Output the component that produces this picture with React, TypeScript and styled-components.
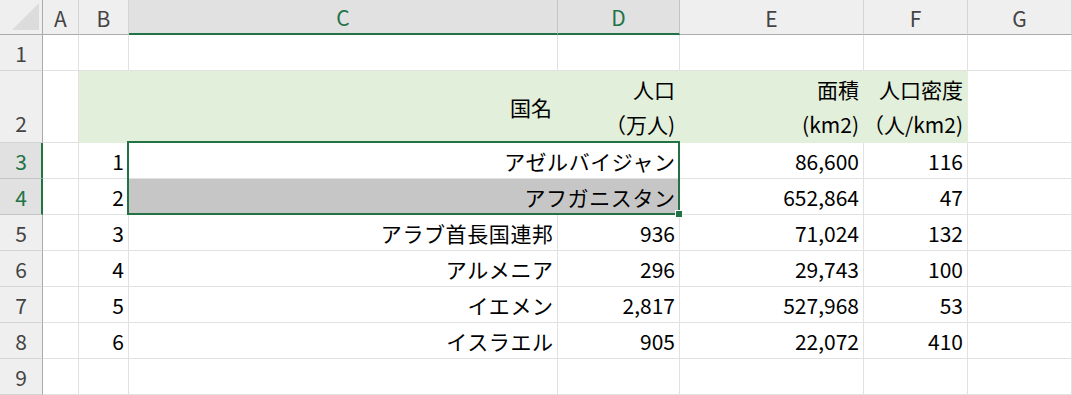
import React from 'react';
import styled, { createGlobalStyle, css } from 'styled-components';

const GlobalStyle = createGlobalStyle`
  html, body {
    margin: 0;
    padding: 0;
    background: #ffffff;
  }
  body {
    font-family: "Noto Sans CJK JP", "Noto Sans", sans-serif;
  }
`;

const GREEN = '#217346';
const GRID = '#e1e1e1';
const HEAD_BG = '#efefef';
const HEAD_SEL_BG = '#e1e1e1';
const HEAD_LINE = '#ababab';
const FILL = '#e2efda';

const Sheet = styled.div`
  position: relative;
  display: grid;
  grid-template-columns: 43px 36px 50px 429px 122px 184px 104px 104px;
  grid-template-rows: 35px 36px 72px repeat(7, 36px);
  width: 1072px;
  height: 395px;
  overflow: hidden;
  font-size: 21px;
  color: #000;
`;

const Corner = styled.div`
  position: relative;
  background: ${HEAD_BG};
  border-right: 1px solid ${HEAD_LINE};
  border-bottom: 1px solid ${HEAD_LINE};
  box-sizing: border-box;

  svg {
    position: absolute;
    left: 0;
    top: 0;
  }
`;

const ColHead = styled.div<{ $sel?: boolean }>`
  display: flex;
  align-items: center;
  justify-content: center;
  box-sizing: border-box;
  padding-top: 1px;
  background: ${HEAD_BG};
  color: #444;
  border-right: 1px solid #d4d4d4;
  border-bottom: 1px solid ${HEAD_LINE};
  ${(p) =>
    p.$sel &&
    css`
      background: ${HEAD_SEL_BG};
      color: ${GREEN};
      border-right-color: #c4c4c4;
      border-bottom: 2px solid ${GREEN};
    `}
`;

const RowHead = styled.div<{ $sel?: boolean; $bottom?: boolean }>`
  display: flex;
  align-items: ${(p) => (p.$bottom ? 'flex-end' : 'center')};
  justify-content: center;
  box-sizing: border-box;
  padding-bottom: ${(p) => (p.$bottom ? '4px' : '0')};
  background: ${HEAD_BG};
  color: #444;
  border-right: 1px solid ${HEAD_LINE};
  border-bottom: 1px solid #d4d4d4;
  ${(p) =>
    p.$sel &&
    css`
      background: ${HEAD_SEL_BG};
      color: ${GREEN};
      padding-left: 1px;
      border-right: 2px solid ${GREEN};
      border-bottom-color: #c4c4c4;
    `}
`;

const Cell = styled.div<{ $fill?: string; $span?: number; $pad?: number }>`
  display: flex;
  align-items: center;
  justify-content: flex-end;
  box-sizing: border-box;
  padding: 0 ${(p) => p.$pad ?? 4}px 0 4px;
  white-space: nowrap;
  background: ${(p) => p.$fill || '#ffffff'};
  border-right: 1px solid ${(p) => p.$fill || GRID};
  border-bottom: 1px solid ${(p) => p.$fill || GRID};
  ${(p) => p.$span && css`grid-column: span ${p.$span};`}
`;

// katakana in the sheet is set a touch looser than the font's default
const Name = styled.span`
  letter-spacing: 0.6px;
  margin-right: -0.6px;
`;

const Wrapped = styled.div`
  text-align: right;
  line-height: 35px;
`;

const Selection = styled.div`
  position: absolute;
  grid-column: 4 / 6;
  grid-row: 4 / 6;
  top: -2px;
  left: -2px;
  right: 0;
  bottom: 0;
  border: 2px solid ${GREEN};
  pointer-events: none;
`;

const Handle = styled.div`
  position: absolute;
  right: -5px;
  bottom: -5px;
  width: 6px;
  height: 6px;
  background: ${GREEN};
  border: 1px solid #ffffff;
`;

const cols = ['A', 'B', 'C', 'D', 'E', 'F', 'G'];
const selCols = ['C', 'D'];

type Country = { no: number; name: string; pop: string; area: string; dens: string };

const merged: Country[] = [
  { no: 1, name: 'アゼルバイジャン', pop: '', area: '86,600', dens: '116' },
  { no: 2, name: 'アフガニスタン', pop: '', area: '652,864', dens: '47' },
];

const rest: Country[] = [
  { no: 3, name: 'アラブ首長国連邦', pop: '936', area: '71,024', dens: '132' },
  { no: 4, name: 'アルメニア', pop: '296', area: '29,743', dens: '100' },
  { no: 5, name: 'イエメン', pop: '2,817', area: '527,968', dens: '53' },
  { no: 6, name: 'イスラエル', pop: '905', area: '22,072', dens: '410' },
];

const App: React.FC = () => {
  return (
    <>
      <GlobalStyle />
      <Sheet>
        <Corner>
          <svg width="43" height="35" viewBox="0 0 43 35">
            <polygon points="12,30 39,30 39,3" fill="#dcdcdc" />
          </svg>
        </Corner>
        {cols.map((c) => (
          <ColHead key={c} $sel={selCols.includes(c)}>
            {c}
          </ColHead>
        ))}

        {/* row 1 */}
        <RowHead>1</RowHead>
        {cols.map((c) => (
          <Cell key={c} />
        ))}

        {/* row 2: table header */}
        <RowHead $bottom>2</RowHead>
        <Cell />
        <Cell $fill={FILL} />
        <Cell $fill={FILL} $pad={5}>国名</Cell>
        <Cell $fill={FILL}>
          <Wrapped>
            人口
            <br />
            （万人)
          </Wrapped>
        </Cell>
        <Cell $fill={FILL}>
          <Wrapped>
            面積
            <br />
            (km2)
          </Wrapped>
        </Cell>
        <Cell $fill={FILL}>
          <Wrapped>
            人口密度
            <br />
            （人/km2)
          </Wrapped>
        </Cell>
        <Cell />

        {merged.map((r, i) => (
          <React.Fragment key={r.no}>
            <RowHead $sel>{r.no + 2}</RowHead>
            <Cell />
            <Cell>{r.no}</Cell>
            <Cell $span={2} $fill={i === 1 ? '#c6c6c6' : undefined}>
              <Name>{r.name}</Name>
            </Cell>
            <Cell>{r.area}</Cell>
            <Cell>{r.dens}</Cell>
            <Cell />
          </React.Fragment>
        ))}

        {rest.map((r) => (
          <React.Fragment key={r.no}>
            <RowHead>{r.no + 2}</RowHead>
            <Cell />
            <Cell>{r.no}</Cell>
            <Cell>
              <Name>{r.name}</Name>
            </Cell>
            <Cell>{r.pop}</Cell>
            <Cell>{r.area}</Cell>
            <Cell>{r.dens}</Cell>
            <Cell />
          </React.Fragment>
        ))}

        <RowHead>9</RowHead>
        {cols.map((c) => (
          <Cell key={c} />
        ))}

        <Selection>
          <Handle />
        </Selection>
      </Sheet>
    </>
  );
};

export default App;
